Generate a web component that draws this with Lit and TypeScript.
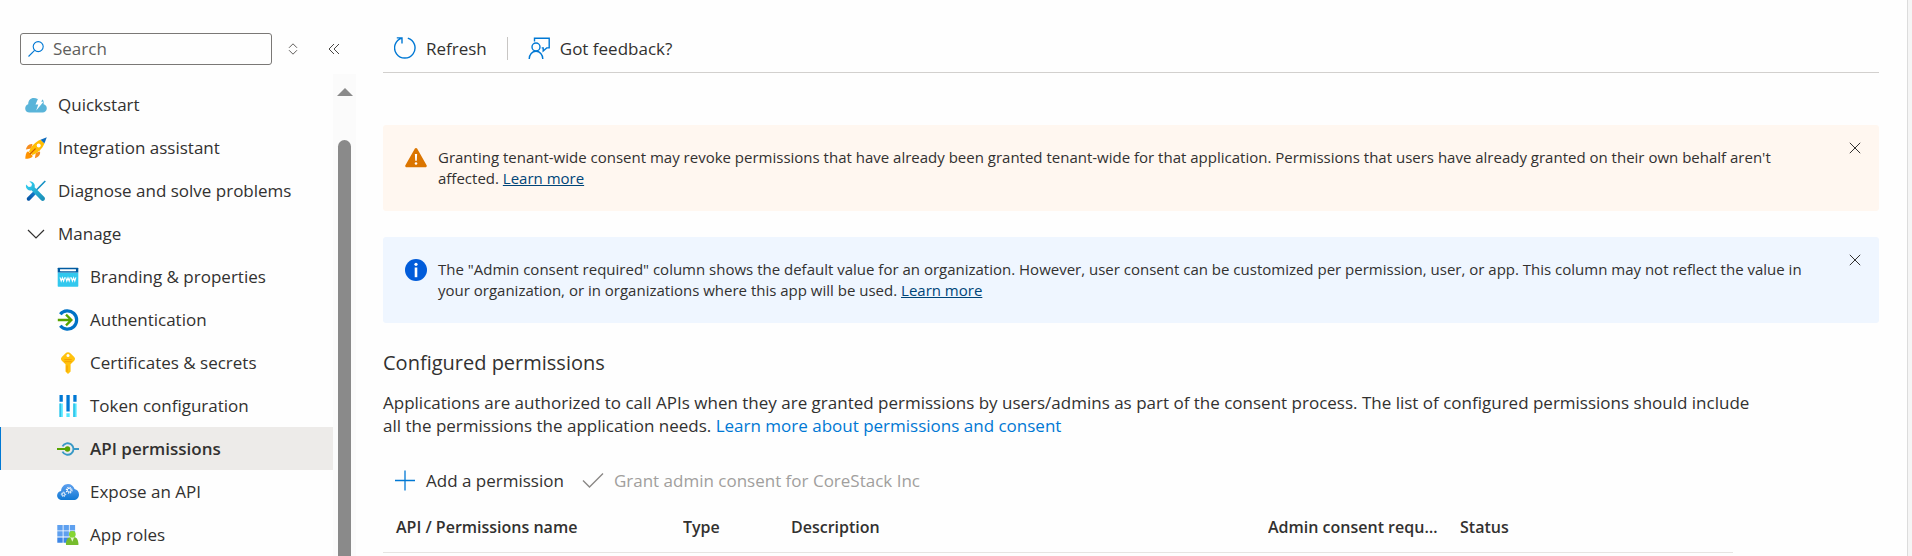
import { LitElement, html, css, svg, TemplateResult } from "lit";
import { customElement, property } from "lit/decorators.js";
import { classMap } from "lit/directives/class-map.js";

type Glyph = { box: string; body: TemplateResult };

const glyphs: Record<string, Glyph> = {
  search: {
    box: "0 0 16 16",
    body: svg`<g fill="none" stroke="#0078d4" stroke-width="1.1"><circle cx="10.2" cy="5.6" r="5"/><path d="M6.6 9.3 0.5 15.5"/></g>`,
  },
  sort: {
    box: "0 0 10 12",
    body: svg`<path d="M1 4.8 5 .8l4 4M1 7.2l4 4 4-4" fill="none" stroke="#605e5c" stroke-width="1"/>`,
  },
  collapse: {
    box: "0 0 12 12",
    body: svg`<path d="M6 1 1 6l5 5M11 1 6 6l5 5" fill="none" stroke="#484644" stroke-width="1"/>`,
  },
  chevron: {
    box: "0 0 22 22",
    body: svg`<path d="M3 7l8 8 8-8" fill="none" stroke="#323130" stroke-width="1.2"/>`,
  },
  close: {
    box: "0 0 12 12",
    body: svg`<path d="M.8.8l10.4 10.4M11.2.8.8 11.2" fill="none" stroke="#323130" stroke-width="1"/>`,
  },
  quickstart: {
    box: "0 0 22 22",
    body: svg`<path d="M4.6 18.6C2 18.6.2 16.7.2 14.4c0-2.1 1.2-3.7 3-4.2C3.200 6.500 5.400 4 8.800 4c1.400 0 2.700.4 3.700 1.100 1-.7 2.100-.8 3.100-.5 1.300.4 2.600 1.300 2.900 2.500.3 1 .3 2.100.1 3.200 1.900.5 3.200 2 3.200 4 0 2.300-1.800 4.300-4.300 4.300z" fill="#59b4d9"/><path d="M13.600 3.600h4.800l-2.200 4.200h2.300l-7.300 8.600 2.100-5.900h-2.800z" fill="#fff"/>`,
  },
  rocket: {
    box: "0 0 22 22",
    body: svg`<path d="M7.500 7.200C4 6.500 2 9 .8 12.400l5.400-.9zM15 14.500c.8 3.500-1.700 5.500-5.100 6.800l.9-5.500z" fill="#f78d1e"/><path d="M3 14.200C.8 15.500.4 18.500.3 21.700c3.200-.1 6.200-.5 7.500-2.800z" fill="#ff9300"/><path d="M15.500 2.700C10.500 4.500 6 9.300 4 14.700l3.400 3.400c5.400-2 10.200-6.500 12-11.500z" fill="#ffbd02"/><path d="M15.500 2.700 21.800.2l-2.400 6.400z" fill="#0f6cbd"/><circle cx="13.700" cy="8.500" r="2" fill="#fff"/><path d="M5.200 16.900l5-5" stroke="#d15900" stroke-width="1.300" stroke-linecap="round"/>`,
  },
  tools: {
    box: "0 0 22 22",
    body: svg`<defs><linearGradient id="w" x1="0" y1="0" x2="1" y2="1"><stop offset="0" stop-color="#32d4f5"/><stop offset="1" stop-color="#198ab3"/></linearGradient><linearGradient id="d" x1="1" y1="0" x2="0" y2="1"><stop offset="0" stop-color="#1988d9"/><stop offset="1" stop-color="#054f9e"/></linearGradient></defs><path d="M20.300 1 9.500 12" stroke="#1490c4" stroke-width="1.600" fill="none"/><path d="M9.300 10.500l2.600 2.600-7 7.100c-.7.700-1.900.7-2.600 0s-.7-1.900 0-2.600z" fill="url(#d)"/><path d="M4.300 1.200 7 3.900 6.300 6.500l-2.500.6L1.100 4.500c-.6 2 0 3.700 1.200 4.800 1.200 1.100 2.700 1.400 4.100 1l9.700 9.900c.9.900 2.300.9 3.200 0s.9-2.300 0-3.200L9.600 7.200c.5-1.500.1-3.100-1-4.300C7.500 1.700 6 .9 4.300 1.200z" fill="url(#w)"/>`,
  },
  branding: {
    box: "0 0 22 22",
    body: svg`<path d="M.7 6.500h20.600v13.600c0 .4-.2.600-.6.600H1.300c-.4 0-.6-.2-.6-.6z" fill="#32c8ee"/><path d="M.7 6.500V2.300c0-.4.200-.6.600-.6h19.400c.4 0 .6.200.6.600v4.200z" fill="#005ba1"/><rect x="3" y="3.200" width="16" height="2" rx=".4" fill="#fff"/><path d="M3 11.300l1.200 3.700 1.200-3.200 1.200 3.200 1.100-3.700M8.600 11.300l1.200 3.700 1.200-3.200 1.200 3.200 1.100-3.700M14.200 11.300l1.200 3.700 1.200-3.200 1.200 3.200 1.100-3.700" fill="none" stroke="#fff" stroke-width="1.100"/>`,
  },
  auth: {
    box: "0 0 22 22",
    body: svg`<path d="M3.300 5.200A9.200 9.200 0 1 1 3.300 16.800" fill="none" stroke="#0072c6" stroke-width="3.200"/><path d="M.8 11h13M9 5.600l5.400 5.400L9 16.400" fill="none" stroke="#57a300" stroke-width="2.300"/>`,
  },
  key: {
    box: "0 0 22 22",
    body: svg`<path d="M11 .3c1 0 1.700.3 2.400 1l3.800 3.700c1.100 1.100 1.100 2.600 0 3.700L13.600 12.300v7.100L11 22l-2.500-2.500V12.300L4.800 8.700c-1.100-1.100-1.100-2.600 0-3.700l3.800-3.700c.7-.7 1.400-1 2.400-1z" fill="#ffc20e"/><circle cx="11" cy="3.400" r="1.500" fill="#fff"/><path d="M7.300 7.600h7.400M7.300 9.700h7.400" stroke="#f5a000" stroke-width="1"/><path d="M10 13.500v6.300" stroke="#f5a000" stroke-width="1.100"/>`,
  },
  token: {
    box: "0 0 22 22",
    body: svg`<path d="M2.500 0h3.300v6.800H2.500zM9.400 0h3.300v16.500H9.400zM16.300 0h3.300v6.800h-3.300z" fill="#0078d4"/><path d="M2.500 8.500h3.300V22H2.500zM9.400 18.200h3.300V22H9.400zM16.300 8.500h3.300V22h-3.300z" fill="#50e6ff"/><path d="M2.500 8.500h1.500V22H2.500zM16.300 8.500h1.500V22h-1.500z" fill="#32bee5"/>`,
  },
  api: {
    box: "0 0 22 22",
    body: svg`<path d="M5.500 8.400a5.800 5.800 0 1 1 0 5.200M16.600 11H22" fill="none" stroke="#3999c6" stroke-width="1.900"/><path d="M0 11h10" stroke="#57a300" stroke-width="2"/><circle cx="10.500" cy="11" r="2.700" fill="#57a300"/>`,
  },
  expose: {
    box: "0 0 22 22",
    body: svg`<defs><linearGradient id="c" x1="0" y1="0" x2="0" y2="1"><stop offset="0" stop-color="#5ea0ef"/><stop offset="1" stop-color="#0f78d4"/></linearGradient></defs><path d="M5 19.100c-2.700 0-4.900-2-4.900-4.600 0-2.400 1.700-4.300 4-4.600.3-3.900 3.200-6.800 6.900-6.800 3.100 0 5.600 2 6.500 5 2.600.4 4.500 2.700 4.500 5.400 0 3.100-2.400 5.600-5.500 5.600z" fill="url(#c)"/><circle cx="12.200" cy="9.200" r="1.900" fill="none" stroke="#fff" stroke-width="1"/><circle cx="12.200" cy="9.200" r="2.900" fill="none" stroke="#fff" stroke-width="1.100" stroke-dasharray="1.200 1.080"/><circle cx="6.500" cy="13.300" r="1.400" fill="none" stroke="#fff" stroke-width=".9"/><circle cx="6.500" cy="13.300" r="2.200" fill="none" stroke="#fff" stroke-width="1" stroke-dasharray=".9 .83"/>`,
  },
  roles: {
    box: "0 0 22 22",
    body: svg`<path d="M.3 1h5.400v5.400H.3zM12.700 1h5.400v5.400h-5.400z" fill="#5ea0ef"/><path d="M6.500 1h5.400v5.400H6.500zM.3 7.200h5.400v5.400H.3zM6.500 7.200h5.400v5.400H6.500z" fill="#5ea0ef"/><path d="M12.700 7.200h5.400v5.400h-5.400zM.3 13.400h5.400v5.400H.3zM6.500 13.400h5.400v5.400H6.500z" fill="#3d86e6"/><path d="M8.900 20.200c.2-3.700 1.500-6.600 4-6.900h4.800c2.500.3 3.600 3.200 3.800 6.900 0 .5-.4.900-.9.900H9.800c-.5 0-.9-.4-.9-.9z" fill="#76bc2d"/><path d="M13.400 13.300h3.800l-1.900 4.500z" fill="#e6f5d0"/><circle cx="15.300" cy="10.200" r="3.300" fill="#86d633"/>`,
  },
  refresh: {
    box: "0 0 22 22",
    body: svg`<path d="M13.800 1.100A10.200 10.200 0 1 1 7.800 1.100M2.800.9H8v5.600" fill="none" stroke="#0078d4" stroke-width="1.400"/>`,
  },
  feedback: {
    box: "0 0 22 22",
    body: svg`<g fill="none" stroke="#0078d4" stroke-width="1.400"><path d="M6.500 4.500V1.200h14.700v9.700h-2.500L15.200 14v-3.100h-1.500"/><circle cx="8" cy="10" r="4"/><path d="M1.200 22c0-4.500 3-7.800 6.800-7.800s6.800 3.300 6.800 7.800"/></g>`,
  },
  plus: {
    box: "0 0 22 22",
    body: svg`<path d="M11 .5v20M1 10.500h20" stroke="#0078d4" stroke-width="1.300"/>`,
  },
  check: {
    box: "0 0 22 22",
    body: svg`<path d="M1 10.500 7.500 17 21 3.500" fill="none" stroke="#8a8886" stroke-width="1.400"/>`,
  },
  warning: {
    box: "0 0 22 22",
    body: svg`<path d="M9.900 1.600c.5-.9 1.700-.9 2.200 0l9.500 16.700c.5.900-.1 1.900-1.100 1.900h-19c-1 0-1.600-1-1.100-1.900z" fill="#db7500"/><path d="M9.900 7h2.200l-.3 6.800h-1.600z" fill="#fff"/><circle cx="11" cy="16.500" r="1.300" fill="#fff"/>`,
  },
  info: {
    box: "0 0 22 22",
    body: svg`<circle cx="11" cy="11" r="11" fill="#015cda"/><circle cx="11" cy="5.300" r="1.600" fill="#fff"/><path d="M9.700 8.500h2.600v9.700H9.700z" fill="#fff"/>`,
  },
  up: {
    box: "0 0 16 8",
    body: svg`<path d="M0 8 8 0l8 8z" fill="#8a8a8a"/>`,
  },
};

@customElement("az-icon")
class AzIcon extends LitElement {
  @property() name = "";
  static styles = css`
    :host { display: block; flex: none; width: 22px; height: 22px; }
    svg { display: block; width: 100%; height: 100%; }
  `;
  render() {
    const g = glyphs[this.name];
    return html`<svg viewBox=${g.box} aria-hidden="true">${g.body}</svg>`;
  }
}

@customElement("az-message")
class AzMessage extends LitElement {
  @property() kind = "info";
  static styles = css`
    :host { display: block; }
    .bar { display: flex; align-items: flex-start; gap: 11px; padding: 22px 14px 22px 22px; border-radius: 3px; }
    .bar.warning { background: #fff7f0; }
    .bar.info { background: #eff6ff; }
    .text { flex: 1; min-width: 0; margin: 0; font-size: 15px; line-height: 21px; }
    .close { flex: none; display: flex; padding: 4px; margin-top: -9px; border: 0; background: none; color: inherit; cursor: pointer; }
    .close az-icon { width: 12px; height: 12px; }
    a { color: #004578; }
  `;
  render() {
    return html`<div class="bar ${this.kind}">
      <az-icon name=${this.kind}></az-icon>
      <p class="text"><slot></slot> <a href="#">Learn more</a></p>
      <button class="close" aria-label="Dismiss"><az-icon name="close"></az-icon></button>
    </div>`;
  }
}

const topItems = [
  { icon: "quickstart", label: "Quickstart" },
  { icon: "rocket", label: "Integration assistant" },
  { icon: "tools", label: "Diagnose and solve problems" },
];
const manageItems = [
  { icon: "branding", label: "Branding & properties" },
  { icon: "auth", label: "Authentication" },
  { icon: "key", label: "Certificates & secrets" },
  { icon: "token", label: "Token configuration" },
  { icon: "api", label: "API permissions", current: true },
  { icon: "expose", label: "Expose an API" },
  { icon: "roles", label: "App roles" },
];
const columns = [
  { label: "API / Permissions name", cls: "name" },
  { label: "Type", cls: "type" },
  { label: "Description", cls: "desc" },
  { label: "Admin consent required", cls: "consent" },
  { label: "Status", cls: "status" },
];

@customElement("app-root")
class AppRoot extends LitElement {
  static styles = css`
    :host {
      display: flex; height: 100vh; overflow: hidden; background: #fefefe; color: #323130;
      font-family: "Segoe UI", "Open Sans", "Noto Sans", sans-serif; font-size: 17px; line-height: 23px;
    }
    * { box-sizing: border-box; }
    button, input { font: inherit; color: inherit; }
    button { border: 0; background: none; padding: 0; cursor: pointer; }
    .side { flex: none; width: 356px; display: flex; flex-direction: column; }
    .find { display: flex; align-items: center; padding: 33px 16px 9px 20px; }
    .box { flex: 1; min-width: 0; display: flex; align-items: center; gap: 9px; height: 32px; padding: 0 7px; border: 1px solid #7a7876; border-radius: 3px; }
    .box az-icon { width: 16px; height: 16px; }
    .box input { flex: 1; min-width: 0; padding: 0 0 2px; border: 0; outline: 0; background: none; }
    .box input::placeholder { color: #605e5c; opacity: 1; }
    .sort { margin-left: 16px; }
    .sort az-icon { width: 10px; height: 12px; }
    .fold { margin-left: 30px; }
    .fold az-icon { width: 12px; height: 12px; }
    .scroll { flex: 1; min-height: 0; display: flex; }
    nav { flex: 1; min-width: 0; overflow: hidden; padding-top: 9px; }
    ul { list-style: none; margin: 0; padding: 0; }
    .item { display: flex; align-items: center; gap: 11px; width: 100%; height: 43px; padding-left: 25px; color: inherit; text-decoration: none; text-align: left; white-space: nowrap; }
    .sub .item { padding-left: 56px; border-left: 1px solid transparent; }
    .sub .item.current { background: #edebe9; font-weight: 600; border-left-color: #0078d4; }
    .track { flex: none; width: 23px; display: flex; flex-direction: column; align-items: center; padding-top: 14px; background: #fbfbfb; }
    .track az-icon { width: 16px; height: 8px; }
    .thumb { flex: 1; width: 13px; margin-top: 44px; border-radius: 7px 7px 0 0; background: #8a8a8a; }
    main { flex: 1; min-width: 0; padding: 24px 28px 0 27px; }
    .edge { flex: none; width: 5px; border-left: 1px solid #dcdcdc; background: #f5f5f5; }
    .commands { display: flex; align-items: center; height: 49px; padding-left: 11px; border-bottom: 1px solid #d2d0ce; }
    .command { display: flex; align-items: center; gap: 10px; white-space: nowrap; }
    .command:disabled { color: #a19f9d; cursor: default; }
    .rule { width: 1px; height: 23px; margin: 0 20px; background: #c8c6c4; }
    .messages { display: grid; gap: 26px; margin-top: 52px; }
    h2 { margin: 26px 0 0; font-size: 20px; line-height: 28px; font-weight: 400; }
    .lead { max-width: 1370px; margin: 14px 0 0; }
    .lead a { color: #0078d4; text-decoration: none; }
    .actions { display: flex; gap: 18px; padding-left: 11px; margin-top: 32px; }
    table { width: 100%; max-width: 1350px; margin-top: 12px; border-collapse: collapse; table-layout: fixed; }
    th { height: 48px; padding: 0 20px 0 0; text-align: left; font-weight: 600; font-size: 16px; border-bottom: 1px solid #e6e4e2; overflow: hidden; text-overflow: ellipsis; white-space: nowrap; }
    .name { width: 300px; padding-left: 13px; }
    .type { width: 108px; }
    .consent { width: 192px; }
    .status { width: 273px; }
  `;

  private item(i: { icon: string; label: string; current?: boolean }) {
    return html`<li><a href="#" class=${classMap({ item: true, current: !!i.current })}><az-icon name=${i.icon}></az-icon>${i.label}</a></li>`;
  }

  render() {
    return html`
      <aside class="side">
        <div class="find">
          <label class="box"><az-icon name="search"></az-icon><input type="text" placeholder="Search" aria-label="Search" /></label>
          <button class="sort" aria-label="Expand or collapse all"><az-icon name="sort"></az-icon></button>
          <button class="fold" aria-label="Hide menu"><az-icon name="collapse"></az-icon></button>
        </div>
        <div class="scroll">
          <nav>
            <ul>
              ${topItems.map((i) => this.item(i))}
              <li>
                <button class="item" aria-expanded="true"><az-icon name="chevron"></az-icon>Manage</button>
                <ul class="sub">${manageItems.map((i) => this.item(i))}</ul>
              </li>
            </ul>
          </nav>
          <div class="track"><az-icon name="up"></az-icon><div class="thumb"></div></div>
        </div>
      </aside>
      <main>
        <div class="commands">
          <button class="command"><az-icon name="refresh"></az-icon>Refresh</button>
          <span class="rule"></span>
          <button class="command"><az-icon name="feedback"></az-icon>Got feedback?</button>
        </div>
        <div class="messages">
          <az-message kind="warning">Granting tenant-wide consent may revoke permissions that have already been granted tenant-wide for that application. Permissions that users have already granted on their own behalf aren't affected.</az-message>
          <az-message kind="info">The "Admin consent required" column shows the default value for an organization. However, user consent can be customized per permission, user, or app. This column may not reflect the value in your organization, or in organizations where this app will be used.</az-message>
        </div>
        <section>
          <h2>Configured permissions</h2>
          <p class="lead">Applications are authorized to call APIs when they are granted permissions by users/admins as part of the consent process. The list of configured permissions should include all the permissions the application needs. <a href="#">Learn more about permissions and consent</a></p>
          <div class="actions">
            <button class="command"><az-icon name="plus"></az-icon>Add a permission</button>
            <button class="command" disabled><az-icon name="check"></az-icon>Grant admin consent for CoreStack Inc</button>
          </div>
          <table>
            <thead><tr>${columns.map((c) => html`<th class=${c.cls} scope="col">${c.label}</th>`)}</tr></thead>
          </table>
        </section>
      </main>
      <div class="edge"></div>
    `;
  }
}
